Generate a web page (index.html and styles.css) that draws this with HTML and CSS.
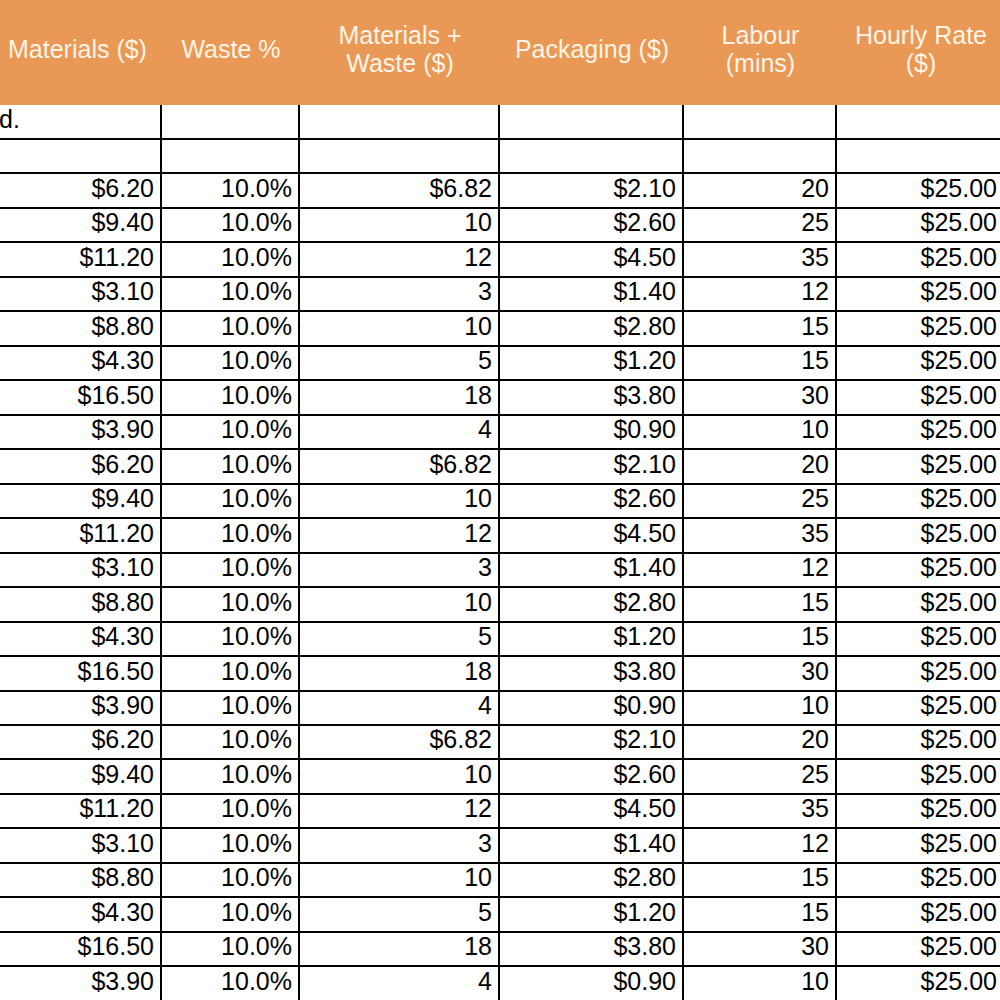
FILE: index.html
```html
<!DOCTYPE html>
<html lang="en">
<head>
<meta charset="utf-8">
<title>Cost sheet</title>
<link rel="stylesheet" href="styles.css">
</head>
<body>
<div class="sheet">
  <div class="hd">Materials ($)</div>
  <div class="hd">Waste %</div>
  <div class="hd">Materials +<br>Waste ($)</div>
  <div class="hd">Packaging ($)</div>
  <div class="hd">Labour<br>(mins)</div>
  <div class="hd">Hourly Rate<br>($)</div>

  <div class="c left">d.</div><div class="c"></div><div class="c"></div><div class="c"></div><div class="c"></div><div class="c"></div>
  <div class="c"></div><div class="c"></div><div class="c"></div><div class="c"></div><div class="c"></div><div class="c"></div>

  <div class="c">$6.20</div><div class="c">10.0%</div><div class="c">$6.82</div><div class="c">$2.10</div><div class="c">20</div><div class="c">$25.00</div>
  <div class="c">$9.40</div><div class="c">10.0%</div><div class="c">10</div><div class="c">$2.60</div><div class="c">25</div><div class="c">$25.00</div>
  <div class="c">$11.20</div><div class="c">10.0%</div><div class="c">12</div><div class="c">$4.50</div><div class="c">35</div><div class="c">$25.00</div>
  <div class="c">$3.10</div><div class="c">10.0%</div><div class="c">3</div><div class="c">$1.40</div><div class="c">12</div><div class="c">$25.00</div>
  <div class="c">$8.80</div><div class="c">10.0%</div><div class="c">10</div><div class="c">$2.80</div><div class="c">15</div><div class="c">$25.00</div>
  <div class="c">$4.30</div><div class="c">10.0%</div><div class="c">5</div><div class="c">$1.20</div><div class="c">15</div><div class="c">$25.00</div>
  <div class="c">$16.50</div><div class="c">10.0%</div><div class="c">18</div><div class="c">$3.80</div><div class="c">30</div><div class="c">$25.00</div>
  <div class="c">$3.90</div><div class="c">10.0%</div><div class="c">4</div><div class="c">$0.90</div><div class="c">10</div><div class="c">$25.00</div>

  <div class="c">$6.20</div><div class="c">10.0%</div><div class="c">$6.82</div><div class="c">$2.10</div><div class="c">20</div><div class="c">$25.00</div>
  <div class="c">$9.40</div><div class="c">10.0%</div><div class="c">10</div><div class="c">$2.60</div><div class="c">25</div><div class="c">$25.00</div>
  <div class="c">$11.20</div><div class="c">10.0%</div><div class="c">12</div><div class="c">$4.50</div><div class="c">35</div><div class="c">$25.00</div>
  <div class="c">$3.10</div><div class="c">10.0%</div><div class="c">3</div><div class="c">$1.40</div><div class="c">12</div><div class="c">$25.00</div>
  <div class="c">$8.80</div><div class="c">10.0%</div><div class="c">10</div><div class="c">$2.80</div><div class="c">15</div><div class="c">$25.00</div>
  <div class="c">$4.30</div><div class="c">10.0%</div><div class="c">5</div><div class="c">$1.20</div><div class="c">15</div><div class="c">$25.00</div>
  <div class="c">$16.50</div><div class="c">10.0%</div><div class="c">18</div><div class="c">$3.80</div><div class="c">30</div><div class="c">$25.00</div>
  <div class="c">$3.90</div><div class="c">10.0%</div><div class="c">4</div><div class="c">$0.90</div><div class="c">10</div><div class="c">$25.00</div>

  <div class="c">$6.20</div><div class="c">10.0%</div><div class="c">$6.82</div><div class="c">$2.10</div><div class="c">20</div><div class="c">$25.00</div>
  <div class="c">$9.40</div><div class="c">10.0%</div><div class="c">10</div><div class="c">$2.60</div><div class="c">25</div><div class="c">$25.00</div>
  <div class="c">$11.20</div><div class="c">10.0%</div><div class="c">12</div><div class="c">$4.50</div><div class="c">35</div><div class="c">$25.00</div>
  <div class="c">$3.10</div><div class="c">10.0%</div><div class="c">3</div><div class="c">$1.40</div><div class="c">12</div><div class="c">$25.00</div>
  <div class="c">$8.80</div><div class="c">10.0%</div><div class="c">10</div><div class="c">$2.80</div><div class="c">15</div><div class="c">$25.00</div>
  <div class="c">$4.30</div><div class="c">10.0%</div><div class="c">5</div><div class="c">$1.20</div><div class="c">15</div><div class="c">$25.00</div>
  <div class="c">$16.50</div><div class="c">10.0%</div><div class="c">18</div><div class="c">$3.80</div><div class="c">30</div><div class="c">$25.00</div>
  <div class="c">$3.90</div><div class="c">10.0%</div><div class="c">4</div><div class="c">$0.90</div><div class="c">10</div><div class="c">$25.00</div>
</div>
</body>
</html>
```
FILE: styles.css
```css
html, body {
  margin: 0;
  padding: 0;
  overflow: hidden;
  background: #ffffff;
}
body {
  width: 1000px;
  height: 1000px;
  font-family: "Liberation Sans", Arial, sans-serif;
  font-size: 25px;
  color: #000000;
}
.sheet {
  display: grid;
  grid-template-columns: 169px 138px 200px 184px 153px 168px;
  grid-template-rows: 105px 35px;
  grid-auto-rows: 34.47px;
  margin-left: -7px;
  width: 1012px;
}
.hd {
  background: #ea9855;
  color: #fff5e8;
  display: flex;
  align-items: center;
  justify-content: center;
  text-align: center;
  line-height: 28px;
  padding-bottom: 7px;
  box-sizing: border-box;
  white-space: nowrap;
}
.c {
  box-sizing: border-box;
  border-right: 2px solid #000000;
  border-bottom: 2px solid #000000;
  display: flex;
  align-items: flex-end;
  justify-content: flex-end;
  padding: 0 6px 5px 0;
  line-height: 28px;
  white-space: nowrap;
}
.c.left {
  justify-content: flex-start;
  padding-left: 6px;
}
```
